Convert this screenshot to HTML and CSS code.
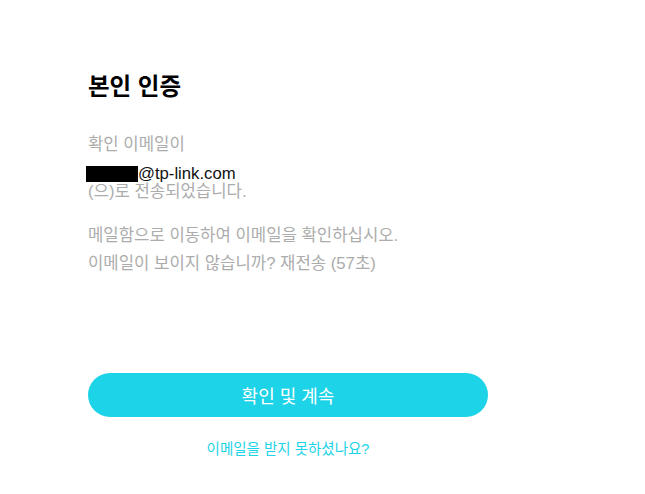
FILE: index.html
```html
<!DOCTYPE html>
<html lang="ko">
<head>
    <meta charset="UTF-8">
    <meta name="viewport" content="width=device-width, initial-scale=1.0">
    <title>본인 인증</title>
    <link rel="stylesheet" href="styles.css">
</head>
<body>

    <div class="container">
        <h1>본인 인증</h1>

        <!-- 이메일 안내 -->
        <div class="info">
            <p class="label">확인 이메일이</p>
            <p class="email"><span class="mask"></span>@tp-link.com</p>
            <p class="label">(으)로 전송되었습니다.</p>
        </div>

        <div class="hint">
            <p>메일함으로 이동하여 이메일을 확인하십시오.</p>
            <p>이메일이 보이지 않습니까? 재전송 (57초)</p>
        </div>

        <button class="confirm" type="button">확인 및 계속</button>
        <a class="help" href="#">이메일을 받지 못하셨나요?</a>
    </div>

</body>
</html>
```

FILE: styles.css
```css
/* 본인 인증 화면 */
body {
    font-family: Arial, "Liberation Sans", "Noto Sans CJK KR", sans-serif;
    margin: 0;
    padding: 0;
    background-color: #fff;
}

.container {
    width: 400px;
    padding: 72px 0 0 88px;
}

h1 {
    margin: 0;
    font-size: 23.5px;
    font-weight: bold;
    color: #000;
    line-height: 30px;
}

p {
    margin: 0;
}

.info {
    margin-top: 34px;
    font-size: 16.7px;
}

.label {
    color: #acacac;
    line-height: 18px;
}

.email {
    margin-top: 11px;
    color: #111;
    line-height: 18px;
    display: flex;
    align-items: center;
}

.mask {
    display: inline-block;
    width: 52px;
    height: 16px;
    margin: 0 0 1px -2px;
    background-color: #000;
}

.hint {
    margin-top: 21px;
    font-size: 16.7px;
    color: #acacac;
}

.hint p {
    line-height: 28px;
}

.confirm {
    display: block;
    width: 100%;
    height: 44px;
    margin-top: 95px;
    background-color: #1dd3e7;
    color: white;
    border: none;
    border-radius: 22px;
    font-family: inherit;
    font-size: 18px;
}

.help {
    display: block;
    margin-top: 20px;
    text-align: center;
    font-size: 14.5px;
    color: #1dd3e7;
    text-decoration: none;
}
```
